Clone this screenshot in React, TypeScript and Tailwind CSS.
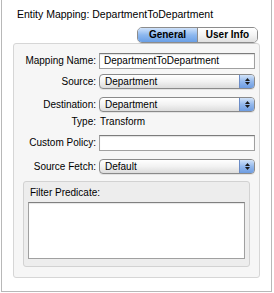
import { useState } from "react";

const font = { fontFamily: '"Liberation Sans", Arial, sans-serif' };

function Popup({ value }: { value: string }) {
  return (
    <div className="flex h-[15px] w-[156px] items-stretch overflow-hidden rounded-[4px] border border-[#8a8a8a] bg-gradient-to-b from-white via-[#f2f2f2] to-[#dcdcdc] shadow-[0_1px_0_rgba(0,0,0,0.08)]">
      <div className="flex-1 pl-[5px] text-[10px] leading-[13px] text-black">{value}</div>
      <div className="flex w-[15px] flex-col items-center justify-center gap-[1px] border-l border-[#6b8cc6] bg-gradient-to-b from-[#d2e3f8] via-[#93b8ec] to-[#6e9de2]">
        <svg width="5" height="3" viewBox="0 0 5 3"><path d="M2.5 0L5 3H0z" fill="#1a1a1a" /></svg>
        <svg width="5" height="3" viewBox="0 0 5 3"><path d="M0 0h5L2.5 3z" fill="#1a1a1a" /></svg>
      </div>
    </div>
  );
}

function Field({ value }: { value: string }) {
  return (
    <div className="h-[16px] w-[156px] border border-[#a0a0a0] border-t-[#7c7c7c] bg-white pl-[4px] text-[10px] leading-[14px] text-black shadow-[inset_0_1px_1px_rgba(0,0,0,0.12)]">
      {value}
    </div>
  );
}

function Row({ label, children, cls }: { label: string; children: React.ReactNode; cls: string }) {
  return (
    <div className={`flex items-center ${cls}`}>
      <div className="w-[85px] pr-[3px] text-right text-[10px] leading-[14px] text-black">{label}</div>
      {children}
    </div>
  );
}

export default function App() {
  const [tab, setTab] = useState(0);

  return (
    <div className="h-[293px] w-[274px] bg-white text-black" style={font}>
      <div className="ml-[1px] h-[292px] w-[271px] border border-t-0 border-[#b8b8b8] bg-white">
        <div className="pl-[15px] pt-[8px] text-[10.5px] leading-[13px]">Entity Mapping: DepartmentToDepartment</div>

        <div className="relative z-10 mt-[6px] flex justify-end pr-[13px]">
          <div className="flex h-[16px] overflow-hidden rounded-[5px] border border-[#8c8c8c] text-[10px] font-bold leading-[14px] shadow-[0_1px_0_rgba(0,0,0,0.08)]">
            <button
              onClick={() => setTab(0)}
              className={`w-[59px] text-center ${tab === 0 ? "bg-gradient-to-b from-[#cfe2fa] via-[#8db8ef] to-[#6a9fe6]" : "bg-gradient-to-b from-white via-[#f4f4f4] to-[#e0e0e0]"}`}
            >
              General
            </button>
            <button
              onClick={() => setTab(1)}
              className={`w-[60px] border-l border-[#8c8c8c] text-center ${tab === 1 ? "bg-gradient-to-b from-[#cfe2fa] via-[#8db8ef] to-[#6a9fe6]" : "bg-gradient-to-b from-white via-[#f4f4f4] to-[#e0e0e0]"}`}
            >
              User Info
            </button>
          </div>
        </div>

        <div className="mx-[11px] h-[235px] rounded-[3px] border border-[#d6d6d6] bg-[#f6f6f6] pt-[9px]">
          <Row label="Mapping Name:" cls="h-[16px]">
            <Field value="DepartmentToDepartment" />
          </Row>
          <Row label="Source:" cls="mt-[5px] h-[15px]">
            <Popup value="Department" />
          </Row>
          <Row label="Destination:" cls="mt-[8px] h-[15px]">
            <Popup value="Department" />
          </Row>
          <Row label="Type:" cls="mt-[3px] h-[14px]">
            <div className="pl-[1px] text-[10px] leading-[14px]">Transform</div>
          </Row>
          <Row label="Custom Policy:" cls="mt-[6px] h-[16px]">
            <Field value="" />
          </Row>
          <Row label="Source Fetch:" cls="mt-[8px] h-[15px]">
            <Popup value="Default" />
          </Row>

          <div className="mx-[9px] mt-[7px] h-[86px] rounded-[3px] border border-[#d2d2d2] bg-[#ededed] px-[4px] pt-[4px]">
            <div className="pl-[2px] text-[10px] leading-[13px]">Filter Predicate:</div>
            <div className="mt-[3px] h-[57px] border border-[#a0a0a0] border-t-[#808080] bg-white shadow-[inset_0_1px_1px_rgba(0,0,0,0.1)]" />
          </div>
        </div>
      </div>
    </div>
  );
}
